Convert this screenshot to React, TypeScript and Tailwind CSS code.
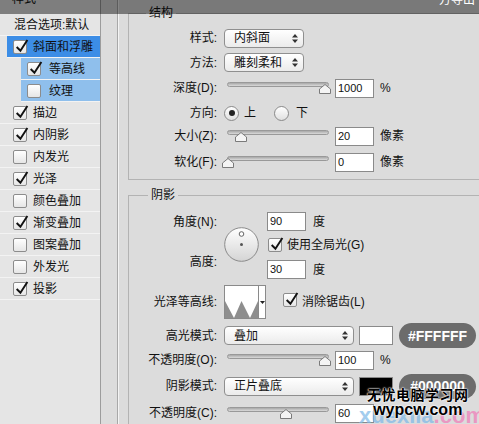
import React from 'react';

function Check({ on }: { on: boolean }) {
  return (
    <span className="relative inline-block w-[14px] h-[14px] shrink-0 rounded-[2px] border border-[#8c8c8c] bg-linear-to-b from-white to-[#e6e6e6]">
      {on && (
        <svg viewBox="0 0 14 14" className="absolute left-[0px] -top-[2px] w-[15px] h-[15px] overflow-visible">
          <path d="M2.5 7.5 L6 11 L12.5 1" fill="none" stroke="#111" strokeWidth="1.8" />
        </svg>
      )}
    </span>
  );
}

function Radio({ on }: { on: boolean }) {
  return (
    <span className="flex items-center justify-center w-[15px] h-[15px] shrink-0 rounded-full border border-[#8a8a8a] bg-linear-to-b from-white to-[#e0e0e0]">
      {on && <span className="w-[6px] h-[6px] rounded-full bg-[#222]" />}
    </span>
  );
}

function Select({ value, className }: { value: string; className: string }) {
  return (
    <div
      className={`flex items-center justify-between h-[19px] shrink-0 rounded-[4px] border border-[#8f8f8f] bg-linear-to-b from-white to-[#ebebeb] pl-[9px] pr-[5px] ${className}`}
    >
      <span>{value}</span>
      <svg width="6" height="9" viewBox="0 0 6 9">
        <path d="M3 0 L6 3.5 H0 Z M0 5.5 H6 L3 9 Z" fill="#333" />
      </svg>
    </div>
  );
}

function Slider({ pos }: { pos: number }) {
  return (
    <div className="relative w-[105px] h-[14px] shrink-0">
      <div className="absolute left-[3px] right-0 top-[1px] h-[5px] rounded-full border border-[#999] bg-linear-to-b from-[#a8a8a8] to-[#dadada]" />
      <svg className="absolute top-[3px]" style={{ left: pos - 6 }} width="12" height="10" viewBox="0 0 12 10">
        <path d="M6 0.5 L11.5 5 V9.5 H0.5 V5 Z" fill="#f4f4f4" stroke="#7a7a7a" />
      </svg>
    </div>
  );
}

function Field({ v }: { v: string }) {
  return (
    <div className="w-[39px] h-[19px] shrink-0 border border-[#8a8a8a] bg-white pl-[2px] text-[11px] leading-[17px]">
      {v}
    </div>
  );
}

function Dial() {
  return (
    <svg width="35" height="35" viewBox="0 0 35 35">
      <defs>
        <linearGradient id="dial" x1="0" y1="0" x2="0" y2="1">
          <stop offset="0" stopColor="#ffffff" />
          <stop offset="1" stopColor="#d4d4d4" />
        </linearGradient>
      </defs>
      <circle cx="17.5" cy="17.5" r="16.8" fill="url(#dial)" stroke="#8a8a8a" />
      <circle cx="17.5" cy="7" r="2.3" fill="#fff" stroke="#555" strokeWidth="0.9" />
      <circle cx="17.5" cy="17.5" r="1.5" fill="#555" />
    </svg>
  );
}

function Pill({ text }: { text: string }) {
  return (
    <div className="flex items-center justify-center w-[77px] h-[25px] shrink-0 rounded-full bg-[#6c6c6c] text-white font-bold text-[14px]">
      {text}
    </div>
  );
}

const styles = [
  { name: '描边', on: true },
  { name: '内阴影', on: true },
  { name: '内发光', on: false },
  { name: '光泽', on: true },
  { name: '颜色叠加', on: false },
  { name: '渐变叠加', on: true },
  { name: '图案叠加', on: false },
  { name: '外发光', on: false },
  { name: '投影', on: true },
];

function LeftList() {
  return (
    <div className="w-[101px] shrink-0 bg-[#e5e5e5] border-r border-[#9c9c9c] flex flex-col">
      <div className="h-[14px] overflow-hidden pl-[12px]">
        <div className="-mt-[9px]">样式</div>
      </div>
      <div className="h-[22px] flex items-center pl-[14px] border-b border-[#f3f3f3]">混合选项:默认</div>
      <div className="h-[22px] ml-[7px] flex items-center gap-[6px] pl-[6px] bg-[#3c8de6] border-b border-[#f3f3f3]">
        <Check on />
        <span>斜面和浮雕</span>
      </div>
      <div className="h-[22px] ml-[21px] flex items-center gap-[8px] pl-[6px] bg-[#8fbfec] border-b border-[#f3f3f3]">
        <Check on />
        <span>等高线</span>
      </div>
      <div className="h-[22px] ml-[21px] flex items-center gap-[8px] pl-[6px] bg-[#8fbfec] border-b border-[#f3f3f3]">
        <Check on={false} />
        <span>纹理</span>
      </div>
      {styles.map((s) => (
        <div key={s.name} className="h-[22px] flex items-center gap-[6px] pl-[13px] border-b border-[#f3f3f3]">
          <Check on={s.on} />
          <span>{s.name}</span>
        </div>
      ))}
    </div>
  );
}

export default function App() {
  return (
    <div className="relative w-[479px] h-[424px] overflow-hidden flex bg-[#dcdcdc] text-[#111] font-['Liberation_Sans','Noto_Sans_CJK_SC',sans-serif] text-[12px] leading-[16px]">
      <LeftList />
      <div className="w-[17px] shrink-0 border-r border-[#a8a8a8]" />
      <div className="w-[360px] shrink-0 pl-[9px] pt-[5px] border-l border-[#f4f4f4]">
        {/* 结构 */}
        <fieldset className="w-[380px] border border-[#b3b3b3] pb-[2px]">
          <legend className="ml-[17px] px-[3px]">结构</legend>
          <div className="pt-[5px]">
            <div className="flex items-center h-[24px]">
              <span className="w-[88px] text-right">样式:</span>
              <Select value="内斜面" className="ml-[7px] w-[80px]" />
            </div>
            <div className="flex items-center h-[25px]">
              <span className="w-[88px] text-right">方法:</span>
              <Select value="雕刻柔和" className="ml-[7px] w-[80px]" />
            </div>
            <div className="flex items-center h-[26px]">
              <span className="w-[88px] text-right">深度(D):</span>
              <div className="ml-[7px]"><Slider pos={101} /></div>
              <div className="ml-[6px]"><Field v="1000" /></div>
              <span className="ml-[6px]">%</span>
            </div>
            <div className="flex items-center h-[24px]">
              <span className="w-[88px] text-right">方向:</span>
              <div className="ml-[7px]"><Radio on /></div>
              <span className="ml-[5px]">上</span>
              <div className="ml-[18px]"><Radio on={false} /></div>
              <span className="ml-[7px]">下</span>
            </div>
            <div className="flex items-center h-[22px]">
              <span className="w-[88px] text-right">大小(Z):</span>
              <div className="ml-[7px]"><Slider pos={17} /></div>
              <div className="ml-[6px]"><Field v="20" /></div>
              <span className="ml-[6px]">像素</span>
            </div>
            <div className="flex items-center h-[30px]">
              <span className="w-[88px] text-right">软化(F):</span>
              <div className="ml-[7px]"><Slider pos={4} /></div>
              <div className="ml-[6px]"><Field v="0" /></div>
              <span className="ml-[6px]">像素</span>
            </div>
          </div>
        </fieldset>

        {/* 阴影 */}
        <fieldset className="mt-[7px] w-[380px] border border-[#b3b3b3]">
          <legend className="ml-[19px] px-[3px]">阴影</legend>
          <div className="flex pt-[7px]">
            <div className="w-[88px] flex flex-col items-end">
              <span className="mt-[4px]">角度(N):</span>
              <span className="mt-[24px]">高度:</span>
            </div>
            <div className="ml-[7px] mt-[17px]"><Dial /></div>
            <div className="ml-[8px] flex flex-col">
              <div className="flex items-center mt-[2px]">
                <Field v="90" />
                <span className="ml-[7px]">度</span>
              </div>
              <div className="flex items-center mt-[6px] ml-[1px]">
                <Check on />
                <span className="ml-[5px]">使用全局光(G)</span>
              </div>
              <div className="flex items-center mt-[7px]">
                <Field v="30" />
                <span className="ml-[7px]">度</span>
              </div>
            </div>
          </div>

          <div className="flex items-center mt-[6px]">
            <span className="w-[88px] text-right">光泽等高线:</span>
            <div className="ml-[7px] flex h-[34px] border border-[#8a8a8a] bg-white">
              <svg width="33" height="32" viewBox="0 0 33 32">
                <path d="M0 32 V15 L9 32 Z M9 32 L16.5 15 L25 32 Z M25 32 L33 15 V32 Z" fill="#8e8e8e" />
              </svg>
              <div className="w-[7px] border-l border-[#8a8a8a] flex items-center justify-center">
                <svg width="5" height="3" viewBox="0 0 5 3">
                  <path d="M0 0 H5 L2.5 3 Z" fill="#222" />
                </svg>
              </div>
            </div>
            <div className="ml-[17px]"><Check on /></div>
            <span className="ml-[5px]">消除锯齿(L)</span>
          </div>

          <div className="flex items-center h-[25px] mt-[4px]">
            <span className="w-[88px] text-right">高光模式:</span>
            <Select value="叠加" className="ml-[7px] w-[130px]" />
            <div className="ml-[5px] w-[34px] h-[19px] border border-[#8a8a8a] bg-white" />
            <div className="ml-[6px]"><Pill text="#FFFFFF" /></div>
          </div>
          <div className="flex items-center h-[22px] mt-[1px]">
            <span className="w-[88px] text-right">不透明度(O):</span>
            <div className="ml-[7px]"><Slider pos={101} /></div>
            <div className="ml-[6px]"><Field v="100" /></div>
            <span className="ml-[6px]">%</span>
          </div>
          <div className="flex items-center h-[26px] mt-[2px]">
            <span className="w-[88px] text-right">阴影模式:</span>
            <Select value="正片叠底" className="ml-[7px] w-[130px]" />
            <div className="ml-[5px] w-[34px] h-[19px] border border-[#8a8a8a] bg-black" />
            <div className="ml-[6px]"><Pill text="#000000" /></div>
          </div>
          <div className="flex items-center h-[24px] mt-[2px]">
            <span className="w-[88px] text-right">不透明度(C):</span>
            <div className="ml-[7px]"><Slider pos={62} /></div>
            <div className="ml-[6px]"><Field v="60" /></div>
          </div>
        </fieldset>
      </div>

      {/* darkened strip across the top */}
      <div className="absolute left-0 right-0 top-0 h-[14px] bg-black/45" />
      <div className="absolute right-[4px] -top-[8px] text-white text-[12px]">方导出</div>

      {/* watermarks */}
      <div className="absolute left-[359px] top-[404px] text-[22px] font-bold font-['Liberation_Sans',sans-serif] leading-[24px] opacity-70">
        <span className="text-[#7db8e8]">xuexila</span>
        <span className="text-[#f07ab8]">.com</span>
      </div>
      <div className="absolute left-[367px] top-[385px] flex flex-col items-center font-bold text-black [text-shadow:0_0_2px_#fff,0_0_2px_#fff,0_0_1px_#fff]">
        <span className="text-[14px] leading-[18px] tracking-[0.5px] font-['Noto_Sans_CJK_SC',sans-serif]">无忧电脑学习网</span>
        <span className="text-[16px] leading-[14px] font-['Liberation_Sans',sans-serif]">wypcw.com</span>
      </div>
    </div>
  );
}
